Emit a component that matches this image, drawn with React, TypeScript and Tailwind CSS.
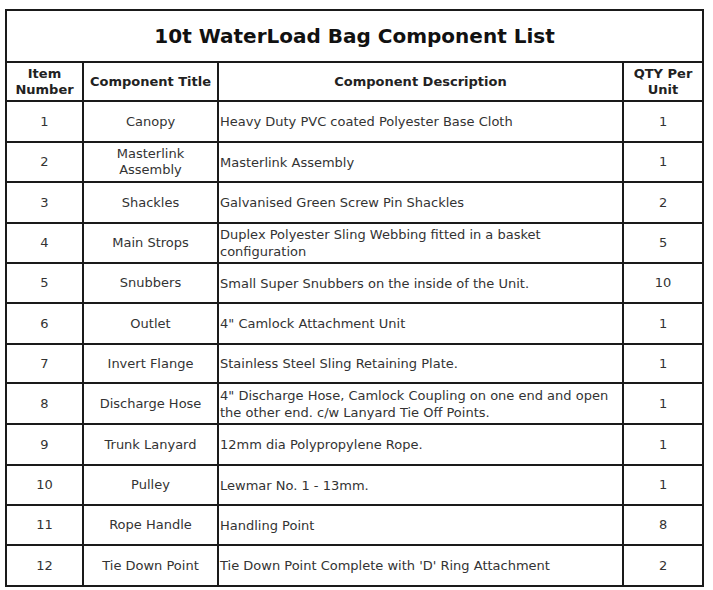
import React from "react";

type Row = { n: string; t: React.ReactNode; d: React.ReactNode; q: string; h: number };

const rows: Row[] = [
  { n: "1", t: "Canopy", d: "Heavy Duty PVC coated Polyester Base Cloth", q: "1", h: 41 },
  { n: "2", t: <>Masterlink<br />Assembly</>, d: "Masterlink Assembly", q: "1", h: 40 },
  { n: "3", t: "Shackles", d: "Galvanised Green Screw Pin Shackles", q: "2", h: 41 },
  { n: "4", t: "Main Strops", d: <>Duplex Polyester Sling Webbing fitted in a basket<br />configuration</>, q: "5", h: 40 },
  { n: "5", t: "Snubbers", d: "Small Super Snubbers on the inside of the Unit.", q: "10", h: 40 },
  { n: "6", t: "Outlet", d: "4\" Camlock Attachment Unit", q: "1", h: 41 },
  { n: "7", t: "Invert Flange", d: "Stainless Steel Sling Retaining Plate.", q: "1", h: 39 },
  { n: "8", t: "Discharge Hose", d: <>4" Discharge Hose, Camlock Coupling on one end and open<br />the other end. c/w Lanyard Tie Off Points.</>, q: "1", h: 41 },
  { n: "9", t: "Trunk Lanyard", d: "12mm dia Polypropylene Rope.", q: "1", h: 41 },
  { n: "10", t: "Pulley", d: "Lewmar No. 1 - 13mm.", q: "1", h: 40 },
  { n: "11", t: "Rope Handle", d: "Handling Point", q: "8", h: 40 },
  { n: "12", t: "Tie Down Point", d: "Tie Down Point Complete with 'D' Ring Attachment", q: "2", h: 41 },
];

export default function App() {
  return (
    <div className="w-[713px] h-[590px] bg-white pt-[9px] pl-[5px]" style={{ fontFamily: '"DejaVu Sans", Verdana, sans-serif' }}>
      <table className="table-fixed border-collapse w-[697px] text-[13px] text-[#333]">
        <colgroup>
          <col className="w-[77px]" />
          <col className="w-[135px]" />
          <col className="w-[405px]" />
          <col className="w-[80px]" />
        </colgroup>
        <tbody>
          <tr className="h-[52px]">
            <td colSpan={4} className="border-2 border-[#1a1a1a] text-center text-[20px] font-bold text-[#111] p-0">
              10t WaterLoad Bag Component List
            </td>
          </tr>
          <tr className="h-[39px]">
            <td className="border-2 border-[#1a1a1a] text-center font-bold text-[#222] leading-[16px] p-0">Item<br />Number</td>
            <td className="border-2 border-[#1a1a1a] text-center font-bold text-[#222] p-0">Component Title</td>
            <td className="border-2 border-[#1a1a1a] text-center font-bold text-[#222] p-0">Component Description</td>
            <td className="border-2 border-[#1a1a1a] text-center font-bold text-[#222] leading-[16px] p-0">QTY Per<br />Unit</td>
          </tr>
          {rows.map((r) => (
            <tr key={r.n} style={{ height: r.h }}>
              <td className="border-2 border-[#1a1a1a] text-center p-0">{r.n}</td>
              <td className="border-2 border-[#1a1a1a] text-center leading-[16px] p-0">{r.t}</td>
              <td className="border-2 border-[#1a1a1a] text-left leading-[17px] py-0 pl-[1px] pr-0">{r.d}</td>
              <td className="border-2 border-[#1a1a1a] text-center p-0">{r.q}</td>
            </tr>
          ))}
        </tbody>
      </table>
    </div>
  );
}
